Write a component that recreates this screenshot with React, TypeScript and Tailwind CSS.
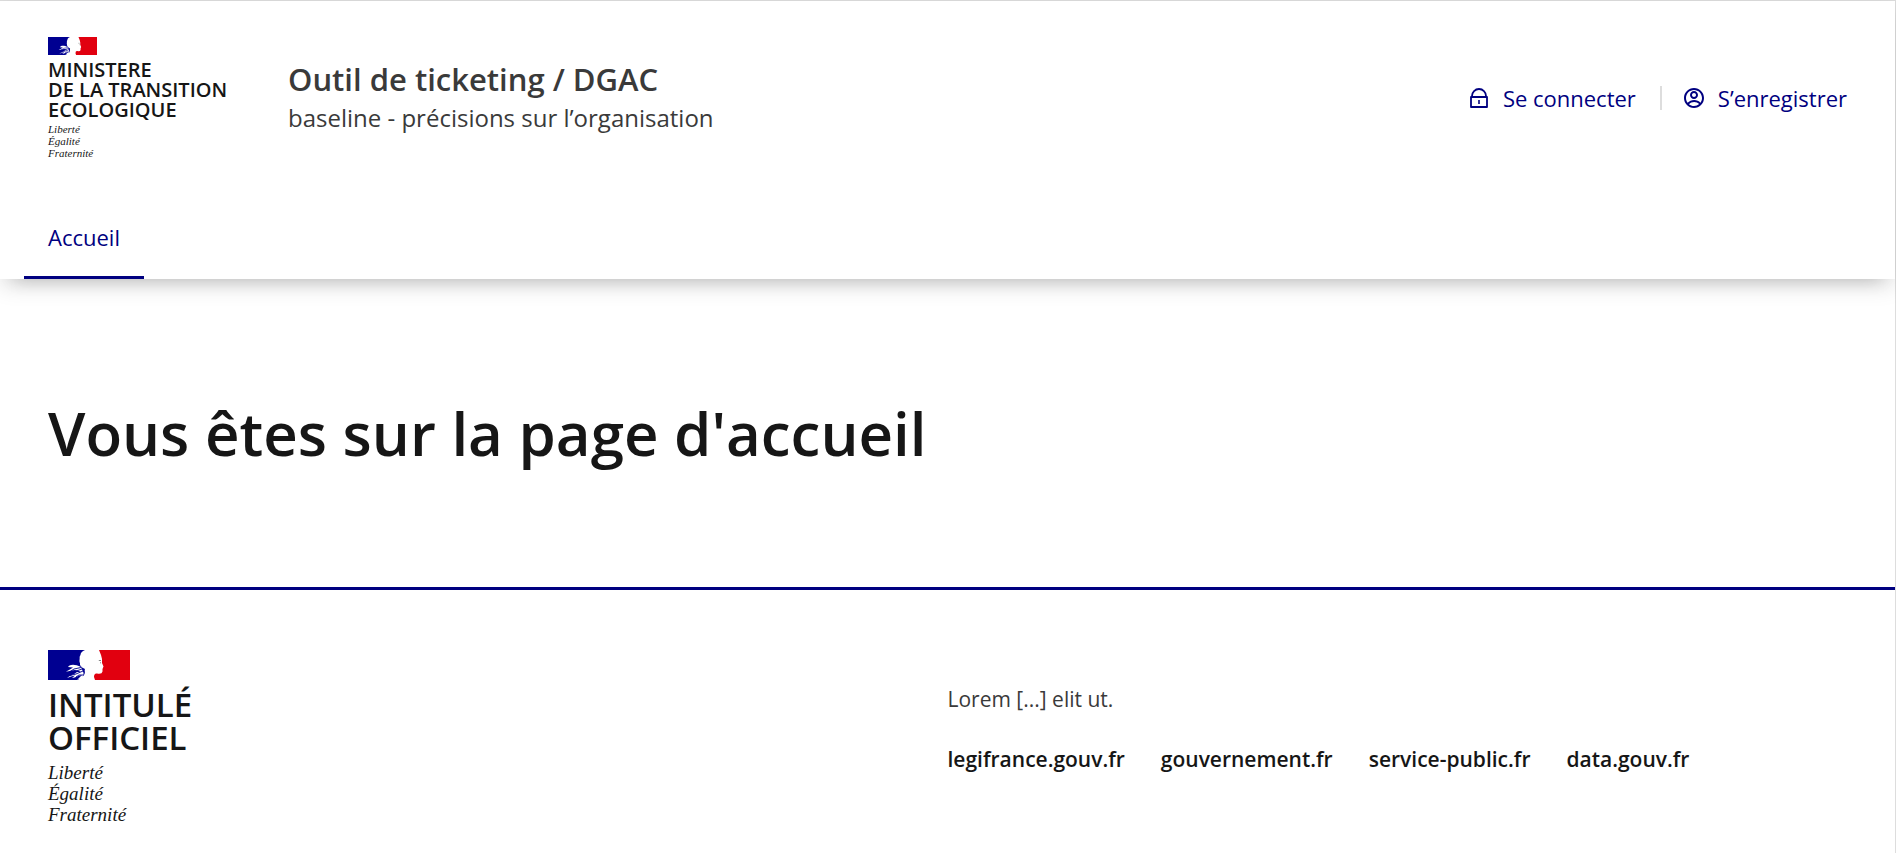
import { RiAccountCircleLine } from "react-icons/ri";

const FOOTER_LINKS = ["legifrance.gouv.fr", "gouvernement.fr", "service-public.fr", "data.gouv.fr"];

function Flag({ className }: { className: string }) {
  return (
    <svg viewBox="0 0 82 30" className={className} aria-hidden="true">
      <path fill="#000091" d="M0 0H37C34 1 32.500 3 32.500 5C31 7 32 8 31.500 10C31 12 32.500 13 32 15C33 17 35 18 37 19C36 21 38 22 36 25L30 30H0Z" />
      <path fill="#e1000f" d="M51 0H82V30H47L46 27Q46 23 49 23.500Q54 24.500 54.500 21.500L54.500 19L55.500 16.500L54 13L54 9L53 5Z" />
      <g fill="#fff">
        <path d="M20 17C22 14 27 14 33 17L36 24L31 21L27 20C24 20 20 22 18 21.500C21 20 23 19 25 17.500Z" />
        <path d="M19 28C22 25 26 25 29 22L35 22L35 25C30 25 28 28 24 28L27 25.500C24 26 22 27 19 28Z" />
        <path d="M30 29L34 25L36 24L34 28L29 30Z" />
      </g>
      <path fill="none" stroke="#000091" strokeWidth="0.900" d="M33 17.500L26 19L20 23L27 21.500L34 19M35 21L28 24L22 25.500M36 25L31 25L28 27" />
      <path fill="none" stroke="#6b6b6b" strokeWidth="0.800" d="M50.800 10.500H53M52 12.800H53" />
    </svg>
  );
}

function LockIcon({ className }: { className: string }) {
  return (
    <svg viewBox="0 0 24 24" className={className} fill="none" stroke="currentColor" strokeWidth="1.800" aria-hidden="true">
      <path strokeLinejoin="round" d="M4 11H20V21H4Z" />
      <path d="M5 11V10A7 7 0 0 1 19 10V11" />
      <path strokeWidth="1.600" d="M12 14V18" />
    </svg>
  );
}

export default function App() {
  return (
    <div className="border-t border-r border-[#dddddd] bg-white font-['Open_Sans',sans-serif] text-[#161616]">
      <header className="relative bg-white shadow-[0_16px_16px_-16px_rgba(0,0,0,0.2),0_8px_20px_0_rgba(0,0,0,0.12)]">
        <div className="flex items-center px-12 pt-9">
          <a href="#" className="block w-48">
            <Flag className="h-[18px] w-[49px]" />
            <p className="mt-[5px] text-[20px] leading-[20px] font-semibold whitespace-nowrap">
              MINISTERE
              <br />
              DE LA TRANSITION
              <br />
              ECOLOGIQUE
            </p>
            <p className="mt-[3px] font-['Liberation_Serif',serif] text-[11px] leading-3 italic">
              Liberté
              <br />
              Égalité
              <br />
              Fraternité
            </p>
          </a>
          <a href="#" className="ml-12 block pb-0.5 text-[#3a3a3a]">
            <p className="text-[31px] leading-[42px] font-semibold">Outil de ticketing / DGAC</p>
            <p className="text-[24px] leading-9">baseline - précisions sur l’organisation</p>
          </a>
          <div className="ml-auto flex items-center text-[22px] leading-9 text-[#000080]">
            <a href="#" className="flex items-center gap-3 pr-6">
              <LockIcon className="size-6" />
              Se connecter
            </a>
            <a href="#" className="flex h-6 items-center gap-3 border-l-2 border-[#dddddd] pl-5">
              <RiAccountCircleLine className="size-6" />
              S’enregistrer
            </a>
          </div>
        </div>
        <nav className="mt-9 flex px-6">
          <a href="#" aria-current="page" className="border-b-3 border-[#000080] px-6 pt-6 pb-[21px] text-[22px] leading-9 text-[#000080]">
            Accueil
          </a>
        </nav>
      </header>
      <main className="px-12 py-[118px]">
        <h1 className="text-[60px] leading-[72px] font-semibold">Vous êtes sur la page d'accueil</h1>
      </main>
      <footer className="grid grid-cols-2 items-center border-t-3 border-[#000080] px-12 pt-[60px] pb-12">
        <a href="#" className="block">
          <Flag className="h-[30px] w-[82px]" />
          <p className="mt-2 text-[33px] leading-[33px] font-semibold">
            INTITULÉ
            <br />
            OFFICIEL
          </p>
          <p className="mt-2 font-['Liberation_Serif',serif] text-[19px] leading-[21px] italic">
            Liberté
            <br />
            Égalité
            <br />
            Fraternité
          </p>
        </a>
        <div className="pb-[18px]">
          <p className="text-[21px] leading-9 text-[#3a3a3a]">Lorem [...] elit ut.</p>
          <ul className="mt-6 flex flex-wrap gap-9 text-[21px] leading-9 font-semibold">
            {FOOTER_LINKS.map((label) => (
              <li key={label}>
                <a href="#">{label}</a>
              </li>
            ))}
          </ul>
        </div>
      </footer>
    </div>
  );
}
